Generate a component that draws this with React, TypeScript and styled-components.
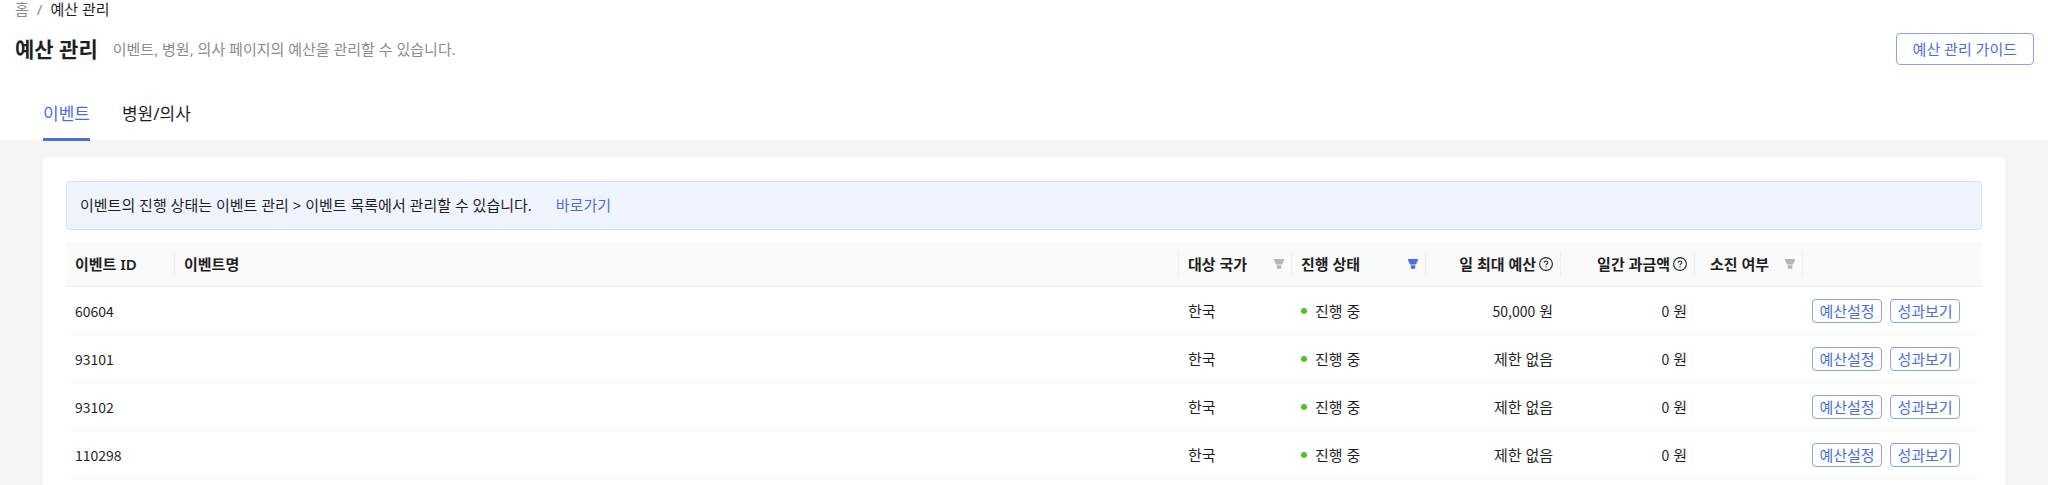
import React, { useState } from "react";
import styled, { createGlobalStyle, css } from "styled-components";

const GlobalStyle = createGlobalStyle`
  *, *::before, *::after { box-sizing: border-box; }
  body {
    margin: 0;
    background: #f5f5f5;
    color: #1f1f1f;
    font-family: "Noto Sans", "Noto Sans CJK KR", sans-serif;
    font-size: 15px;
    line-height: 22px;
  }
  button { font-family: inherit; cursor: pointer; }
  a { text-decoration: none; }
`;

const BLUE = "#4c6ee0";

const Header = styled.header`
  background: #fff;
  padding: 0 14px 0 15px;
`;

const Breadcrumb = styled.nav`
  display: flex;
  gap: 8px;
  height: 20px;
  line-height: 18px;
  color: #8c8c8c;

  a { color: inherit; }
`;

const Current = styled.span`
  color: #1f1f1f;
`;

const TitleRow = styled.div`
  display: flex;
  align-items: center;
  height: 32px;
  margin-top: 13px;
`;

const Title = styled.h1`
  margin: 0 15px 0 0;
  font-size: 21px;
  line-height: 32px;
  font-weight: 700;
`;

const Description = styled.p`
  margin: 0;
  color: #8c8c8c;
`;

const OutlineButton = styled.button<{ $small?: boolean }>`
  flex: none;
  border: 1px solid #8fa2ea;
  border-radius: 4px;
  background: #fff;
  color: ${BLUE};
  font-size: 15px;
  ${(p) =>
    p.$small
      ? css`
          width: 70px;
          height: 24px;
          padding: 0;
          line-height: 20px;
        `
      : css`
          height: 32px;
          margin-left: auto;
          padding: 0 16px;
          line-height: 28px;
        `}
`;

const TabList = styled.div`
  display: flex;
  gap: 32px;
  height: 56px;
  margin-top: 19px;
  padding-left: 28px;
`;

const Tab = styled.button<{ $active: boolean }>`
  margin-bottom: -1px;
  padding: 6px 0 0;
  border: 0;
  border-bottom: 3px solid ${(p) => (p.$active ? BLUE : "transparent")};
  background: none;
  color: ${(p) => (p.$active ? BLUE : "#1f1f1f")};
  font-size: 17px;
  line-height: 24px;
`;

const Card = styled.main`
  margin: 17px 43px 0;
  padding: 24px 23px 6px;
  border-radius: 4px 4px 0 0;
  background: #fff;
`;

const Notice = styled.div`
  display: flex;
  align-items: center;
  gap: 24px;
  height: 49px;
  margin-bottom: 12px;
  padding: 0 13px 2px;
  border: 1px solid #d6e0fb;
  border-radius: 4px;
  background: #f0f4ff;

  a { color: ${BLUE}; }
`;

const Table = styled.table`
  width: 100%;
  table-layout: fixed;
  border-collapse: separate;
  border-spacing: 0;
`;

type Align = "left" | "center" | "right";

const HeadCell = styled.th<{ $align?: Align; $divider?: boolean }>`
  position: relative;
  height: 45px;
  padding: 0 8px 1px 9px;
  border-bottom: 1px solid #f0f0f0;
  background: #fafafa;
  font-weight: 600;
  text-align: ${(p) => p.$align ?? "left"};
  white-space: nowrap;

  ${(p) =>
    p.$divider &&
    css`
      &::after {
        content: "";
        position: absolute;
        top: 10px;
        right: 0;
        width: 1px;
        height: 24px;
        background: #f0f0f0;
      }
    `}
`;

const HeadContent = styled.div<{ $justify?: string }>`
  display: flex;
  align-items: center;
  justify-content: ${(p) => p.$justify ?? "flex-start"};
  gap: 3px;
`;

const CenteredHeadContent = styled(HeadContent)`
  justify-content: center;
  gap: 16px;
  padding-left: 6px;
`;

const IconButton = styled.button<{ $active?: boolean }>`
  display: flex;
  padding: 0;
  border: 0;
  background: none;
  color: ${(p) => (p.$active ? BLUE : "#b5b5b5")};
`;

const Cell = styled.td<{ $align?: Align }>`
  height: 48px;
  padding: 0 8px 0 9px;
  border-bottom: 1px solid #f5f5f5;
  text-align: ${(p) => p.$align ?? "left"};
`;

const Figure = styled.span`
  font-family: "Noto Sans CJK KR", sans-serif;
  font-size: 14px;
`;

const Status = styled.span`
  display: flex;
  align-items: center;
  gap: 8px;

  &::before {
    content: "";
    width: 6px;
    height: 6px;
    border-radius: 50%;
    background: #52c41a;
  }
`;

const Actions = styled.div`
  display: flex;
  gap: 8px;
`;

const FilterIcon = () => (
  <svg width="10" height="10" viewBox="0 0 10 10" fill="currentColor" aria-hidden="true">
    <path d="M0 0h10v1L8 5.400H2L0 1z" />
    <path d="M2.800 6.300h4.400V9.200q0 .6-.6.6h-3.200q-.6 0-.6-.6z" />
  </svg>
);

const HelpIcon = () => (
  <svg width="14" height="14" viewBox="0 0 14 14" fill="none" stroke="#262626" strokeWidth="1.100" aria-hidden="true">
    <circle cx="7" cy="7" r="6.400" />
    <path d="M5.200 5.700c0-1 .8-1.700 1.800-1.700s1.800.7 1.800 1.600c0 1.300-1.800 1.300-1.800 2.600" />
    <circle cx="7" cy="9.900" r=".7" fill="#262626" stroke="none" />
  </svg>
);

interface EventRow {
  id: string;
  name: string;
  dailyLimit?: string;
  spent: string;
}

const rows: EventRow[] = [
  { id: "60604", name: "", dailyLimit: "50,000", spent: "0" },
  { id: "93101", name: "", spent: "0" },
  { id: "93102", name: "", spent: "0" },
  { id: "110298", name: "", spent: "0" },
];

const Won = ({ amount }: { amount: string }) => (
  <>
    <Figure>{amount}</Figure> 원
  </>
);

const tabs = ["이벤트", "병원/의사"];

export default function App() {
  const [active, setActive] = useState(tabs[0]);

  return (
    <>
      <GlobalStyle />
      <Header>
        <Breadcrumb>
          <a href="#home">홈</a>
          <span>/</span>
          <Current>예산 관리</Current>
        </Breadcrumb>
        <TitleRow>
          <Title>예산 관리</Title>
          <Description>이벤트, 병원, 의사 페이지의 예산을 관리할 수 있습니다.</Description>
          <OutlineButton type="button">예산 관리 가이드</OutlineButton>
        </TitleRow>
        <TabList role="tablist">
          {tabs.map((tab) => (
            <Tab
              key={tab}
              type="button"
              role="tab"
              aria-selected={tab === active}
              $active={tab === active}
              onClick={() => setActive(tab)}
            >
              {tab}
            </Tab>
          ))}
        </TabList>
      </Header>
      <Card>
        <Notice>
          <span>이벤트의 진행 상태는 이벤트 관리 &gt; 이벤트 목록에서 관리할 수 있습니다.</span>
          <a href="#events">바로가기</a>
        </Notice>
        <Table>
          <colgroup>
            <col style={{ width: 109 }} />
            <col />
            <col style={{ width: 113 }} />
            <col style={{ width: 134 }} />
            <col style={{ width: 135 }} />
            <col style={{ width: 134 }} />
            <col style={{ width: 108 }} />
            <col style={{ width: 179 }} />
          </colgroup>
          <thead>
            <tr>
              <HeadCell $divider>이벤트 ID</HeadCell>
              <HeadCell $divider>이벤트명</HeadCell>
              <HeadCell $divider>
                <HeadContent $justify="space-between">
                  대상 국가
                  <IconButton type="button" aria-label="대상 국가 필터"><FilterIcon /></IconButton>
                </HeadContent>
              </HeadCell>
              <HeadCell $divider>
                <HeadContent $justify="space-between">
                  진행 상태
                  <IconButton type="button" aria-label="진행 상태 필터" $active><FilterIcon /></IconButton>
                </HeadContent>
              </HeadCell>
              <HeadCell $divider>
                <HeadContent $justify="flex-end">일 최대 예산<HelpIcon /></HeadContent>
              </HeadCell>
              <HeadCell $divider>
                <HeadContent $justify="flex-end">일간 과금액<HelpIcon /></HeadContent>
              </HeadCell>
              <HeadCell $divider>
                <CenteredHeadContent>
                  소진 여부
                  <IconButton type="button" aria-label="소진 여부 필터"><FilterIcon /></IconButton>
                </CenteredHeadContent>
              </HeadCell>
              <HeadCell />
            </tr>
          </thead>
          <tbody>
            {rows.map((row) => (
              <tr key={row.id}>
                <Cell><Figure>{row.id}</Figure></Cell>
                <Cell>{row.name}</Cell>
                <Cell>한국</Cell>
                <Cell><Status>진행 중</Status></Cell>
                <Cell $align="right">{row.dailyLimit ? <Won amount={row.dailyLimit} /> : "제한 없음"}</Cell>
                <Cell $align="right"><Won amount={row.spent} /></Cell>
                <Cell />
                <Cell>
                  <Actions>
                    <OutlineButton type="button" $small>예산설정</OutlineButton>
                    <OutlineButton type="button" $small>성과보기</OutlineButton>
                  </Actions>
                </Cell>
              </tr>
            ))}
          </tbody>
        </Table>
      </Card>
    </>
  );
}
